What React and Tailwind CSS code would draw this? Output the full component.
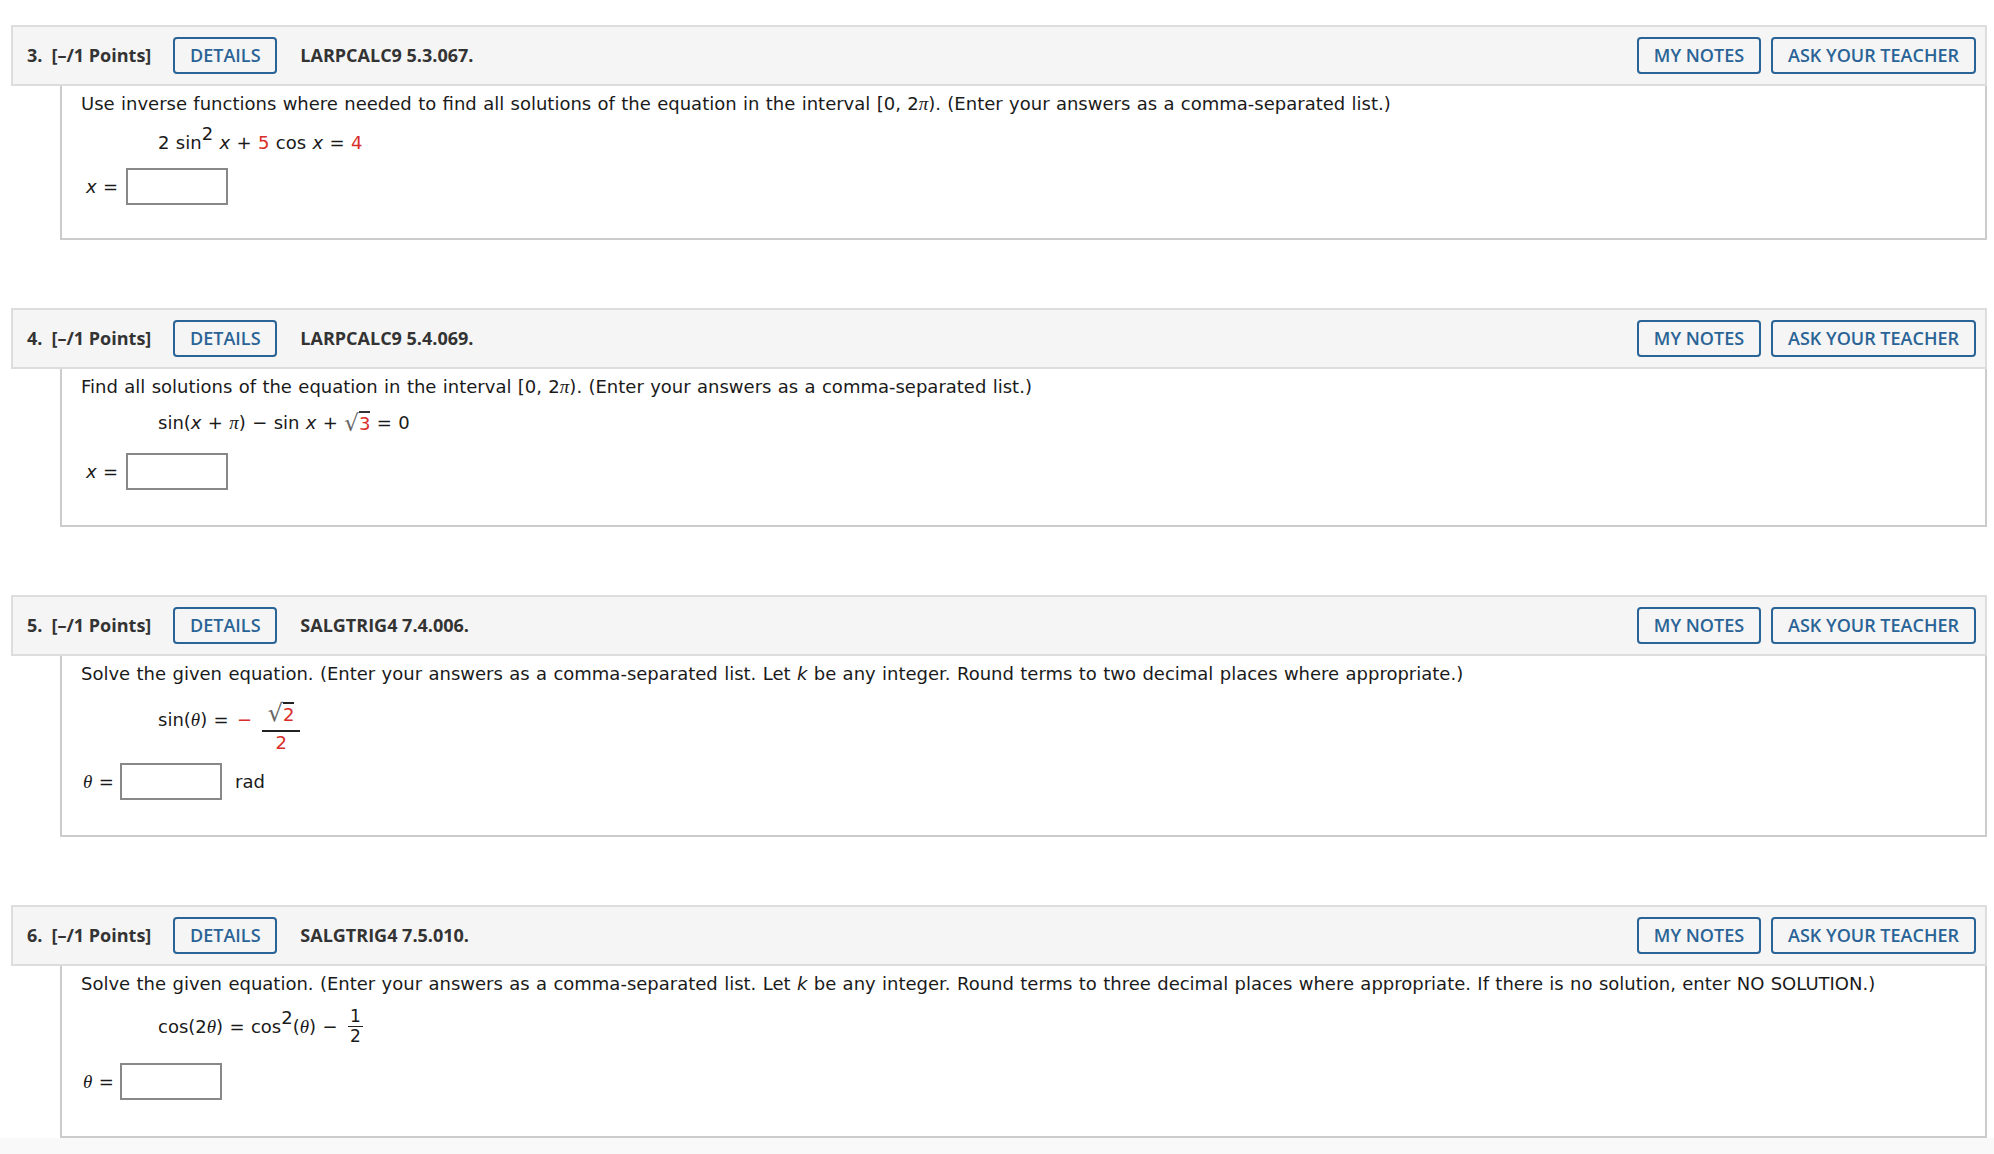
const RED = "text-[#d92d2a]";

function Header({ num, code }) {
  return (
    <div className="ml-[11px] mr-[7px] flex h-[61px] items-center justify-between border-2 border-[#dddddd] bg-[#f5f5f5] pl-[14px] pr-[9px] font-['Open_Sans',sans-serif] text-[18px] text-[#333]">
      <div className="flex items-center">
        <span className="font-bold">{num}.</span>
        <span className="ml-[9px] font-bold">[–/1 Points]</span>
        <button className="ml-[22px] h-[37px] w-[104px] rounded-[4px] border-2 border-[#2a6395] text-[18px] font-semibold text-[#2a6395]">
          DETAILS
        </button>
        <span className="ml-[23px] font-bold">{code}</span>
      </div>
      <div className="flex items-center gap-[10px]">
        <button className="h-[37px] w-[124px] rounded-[4px] border-2 border-[#2a6395] text-[18px] font-semibold text-[#2a6395]">
          MY NOTES
        </button>
        <button className="h-[37px] w-[205px] rounded-[4px] border-2 border-[#2a6395] text-[18px] font-semibold text-[#2a6395]">
          ASK YOUR TEACHER
        </button>
      </div>
    </div>
  );
}

function Body({ children }) {
  return (
    <div className="ml-[60px] mr-[7px] border-2 border-t-0 border-[#cccccc] bg-white pl-[19px] pt-[5px] font-['DejaVu_Sans',sans-serif] text-[18px] leading-[26px] text-[#1a1a1a] [word-spacing:0.65px]">
      {children}
    </div>
  );
}

function Input() {
  return <span className="inline-block h-[37px] w-[102px] border-2 border-[#888888] bg-white" />;
}

function Var({ children }) {
  return <span className="italic">{children}</span>;
}

function Greek({ children }) {
  return <span className="font-['Liberation_Serif'] text-[19px] italic">{children}</span>;
}

function Question({ num, code, children, last }) {
  return (
    <div className={last ? "" : "mb-[68px]"}>
      <Header num={num} code={code} />
      <Body>{children}</Body>
    </div>
  );
}

export default function App() {
  return (
    <div className="min-h-screen bg-white pt-[25px]">
      <Question num={3} code="LARPCALC9 5.3.067.">
        <p>
          Use inverse functions where needed to find all solutions of the equation in the interval [0, 2<Greek>π</Greek>). (Enter your answers as a comma-separated list.)
        </p>
        <div className="ml-[77px] mt-[13px] h-[26px]">
          2 sin<sup className="-top-[9px] text-[18px]">2</sup> <Var>x</Var> + <span className={RED}>5</span> cos <Var>x</Var> = <span className={RED}>4</span>
        </div>
        <div className="mt-[12px] flex items-center pb-[33px]">
          <span className="ml-[5px] w-[40px]"><Var>x</Var> =</span>
          <Input />
        </div>
      </Question>

      <Question num={4} code="LARPCALC9 5.4.069.">
        <p>
          Find all solutions of the equation in the interval [0, 2<Greek>π</Greek>). (Enter your answers as a comma-separated list.)
        </p>
        <div className="ml-[77px] mt-[10px] flex h-[26px] items-center">
          <span className="whitespace-pre">sin(<Var>x</Var> + <Greek>π</Greek>) − sin <Var>x</Var> + </span>
          <span className="text-[23px] leading-[24px] text-[#666]">√</span>
          <span className={`border-t-2 border-[#333] leading-[22px] ${RED}`}>3</span>
          <span className="whitespace-pre"> = 0</span>
        </div>
        <div className="mt-[17px] flex items-center pb-[35px]">
          <span className="ml-[5px] w-[40px]"><Var>x</Var> =</span>
          <Input />
        </div>
      </Question>

      <Question num={5} code="SALGTRIG4 7.4.006.">
        <p>
          Solve the given equation. (Enter your answers as a comma-separated list. Let <Var>k</Var> be any integer. Round terms to two decimal places where appropriate.)
        </p>
        <div className="ml-[77px] -mt-[2px] flex items-center">
          <span className="whitespace-pre">sin(<Greek>θ</Greek>) = </span>
          <span className={`ml-[2px] ${RED}`}>−</span>
          <span className="ml-[10px] inline-flex flex-col items-center pt-[17px]">
            <span className="flex h-[24px] items-end leading-[24px]">
              <span className="text-[24px] leading-[26px] text-[#666]">√</span>
              <span className={`border-t-2 border-[#222] text-[18px] leading-[22px] ${RED}`}>2</span>
            </span>
            <span className="mt-[4px] h-[2px] w-[38px] bg-[#222]" />
            <span className={`text-[18px] leading-[22px] ${RED}`}>2</span>
          </span>
        </div>
        <div className="mt-[9px] flex items-center pb-[35px]">
          <span className="ml-[2px] w-[37px]"><Greek>θ</Greek> =</span>
          <Input />
          <span className="ml-[13px]">rad</span>
        </div>
      </Question>

      <Question num={6} code="SALGTRIG4 7.5.010." last>
        <p>
          Solve the given equation. (Enter your answers as a comma-separated list. Let <Var>k</Var> be any integer. Round terms to three decimal places where appropriate. If there is no solution, enter NO SOLUTION.)
        </p>
        <div className="ml-[77px] mt-[10px] flex items-center">
          <span className="whitespace-pre">cos(2<Greek>θ</Greek>) = cos<sup className="-top-[9px] text-[18px]">2</sup>(<Greek>θ</Greek>) − </span>
          <span className="ml-[4px] inline-flex flex-col items-center text-[17px] leading-[19px]">
            <span>1</span>
            <span className="h-[1px] w-[15px] bg-[#222]" />
            <span>2</span>
          </span>
        </div>
        <div className="mt-[17px] flex items-center pb-[36px]">
          <span className="ml-[2px] w-[37px]"><Greek>θ</Greek> =</span>
          <Input />
        </div>
      </Question>
      <div className="h-[40px] bg-[#f9f9f9]" />
    </div>
  );
}
